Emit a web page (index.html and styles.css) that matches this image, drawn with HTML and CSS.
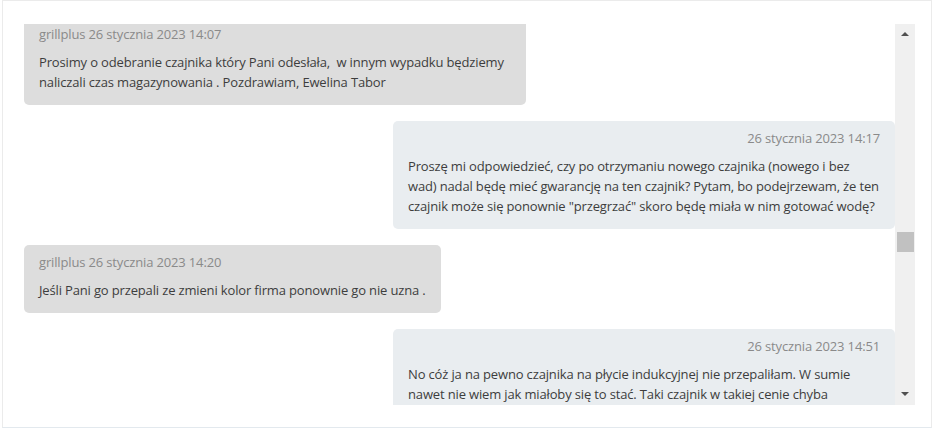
FILE: index.html
```html
<!DOCTYPE html>
<html lang="pl">
<head>
    <meta charset="UTF-8">
    <meta name="viewport" content="width=device-width, initial-scale=1.0">
    <title>Wiadomości</title>
    <link rel="stylesheet" href="styles.css">
</head>
<body>
    <div class="frame">
        <div class="chat">
            <div class="messages">
                <div class="msg msg-them">
                    <div class="msg-head">grillplus 26 stycznia 2023 14:07</div>
                    <div class="msg-body">Prosimy o odebranie czajnika który Pani odesłała,&nbsp; w innym wypadku będziemy naliczali czas magazynowania . Pozdrawiam, Ewelina Tabor</div>
                </div>
                <div class="msg msg-me">
                    <div class="msg-head">26 stycznia 2023 14:17</div>
                    <div class="msg-body">Proszę mi odpowiedzieć, czy po otrzymaniu nowego czajnika (nowego i bez wad) nadal będę mieć gwarancję na ten czajnik? Pytam, bo podejrzewam, że ten czajnik może się ponownie "przegrzać" skoro będę miała w nim gotować wodę?</div>
                </div>
                <div class="msg msg-them">
                    <div class="msg-head">grillplus 26 stycznia 2023 14:20</div>
                    <div class="msg-body">Jeśli Pani go przepali ze zmieni kolor firma ponownie go nie uzna .</div>
                </div>
                <div class="msg msg-me">
                    <div class="msg-head">26 stycznia 2023 14:51</div>
                    <div class="msg-body">No cóż ja na pewno czajnika na płycie indukcyjnej nie przepaliłam. W sumie nawet nie wiem jak miałoby się to stać. Taki czajnik w takiej cenie chyba</div>
                </div>
            </div>
            <div class="scrollbar">
                <span class="arrow arrow-up"></span>
                <div class="track">
                    <span class="thumb"></span>
                </div>
                <span class="arrow arrow-down"></span>
            </div>
        </div>
    </div>
</body>
</html>
```

FILE: styles.css
```css
body{
    margin: 0;
    background: #fff;
    font-family: "Open Sans", "Liberation Sans", sans-serif;
    font-size: 13px;
    letter-spacing: -0.15px;
    color: #444;
}

.frame{
    margin-left: 2px;
    height: 428px;
    box-sizing: border-box;
    border: 1px solid #ebebeb;
    border-bottom-color: #e3e9ee;
    padding: 23px 16px 22px 21px;
}

.chat{
    display: flex;
    height: 381px;
}

.messages{
    flex: 1;
    overflow: hidden;
    display: flex;
    flex-direction: column;
    gap: 16px;
}

/* list is scrolled a little, first bubble is cut at the top */
.messages > .msg:first-child{
    margin-top: -7px;
}

.msg{
    max-width: 472px;
    padding: 7px 15px 13px;
    border-radius: 5px;
    line-height: 20px;
    flex-shrink: 0;
}

.msg-them{
    align-self: flex-start;
    background: #dddddd;
}

.msg-me{
    align-self: flex-end;
    background: #e9edf0;
}

.msg-head{
    color: #8a8a8a;
    margin-bottom: 8px;
}

.msg-me .msg-head{
    text-align: right;
}

.msg-body{
    color: #3d3d3d;
}

/* fake scrollbar */
.scrollbar{
    width: 20px;
    background: #f0f0f0;
    display: flex;
    flex-direction: column;
    align-items: center;
}

.track{
    flex: 1;
    width: 100%;
    position: relative;
}

.thumb{
    position: absolute;
    top: 196px;
    left: 2px;
    width: 17px;
    height: 20px;
    background: #c1c1c1;
}

.arrow{
    width: 0;
    height: 0;
    border-left: 4px solid transparent;
    border-right: 4px solid transparent;
}

.arrow-up{
    margin-top: 8px;
    border-bottom: 4px solid #505050;
}

.arrow-down{
    margin-bottom: 9px;
    border-top: 4px solid #505050;
}
```
